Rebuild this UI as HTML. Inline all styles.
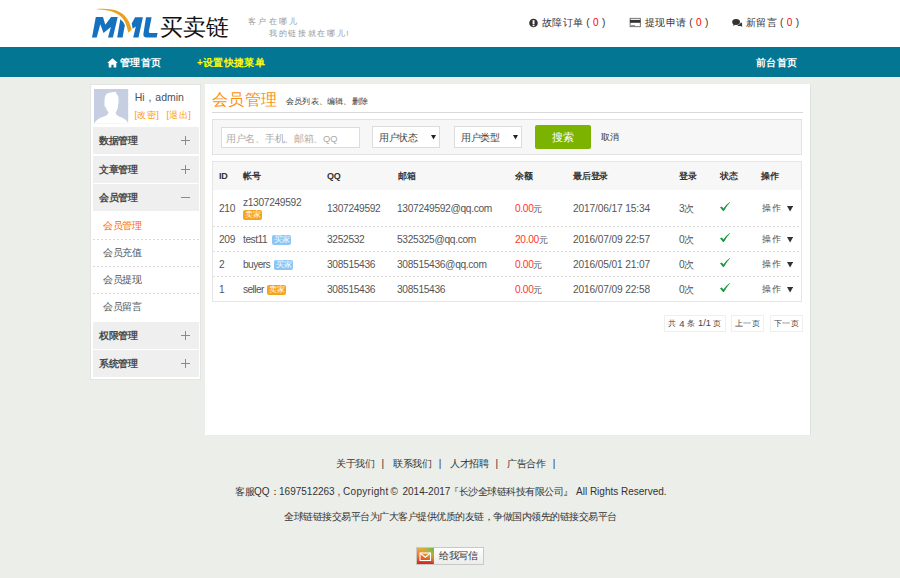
<!DOCTYPE html>
<html><head><meta charset="utf-8">
<style>
*{margin:0;padding:0;box-sizing:border-box}
html,body{width:900px;height:578px;overflow:hidden}
body{background:#eceee9;font-family:"Liberation Sans",sans-serif;color:#333;position:relative}
.a{position:absolute;white-space:nowrap}
#hdr{position:absolute;left:0;top:0;width:900px;height:47px;background:#fff}
#nav{position:absolute;left:0;top:47px;width:900px;height:30px;background:#037693}
#side{position:absolute;left:90px;top:84px;width:111px;height:296px;background:#fff;border:1px solid #e4e4e4}
#main{position:absolute;left:205px;top:84px;width:605px;height:351px;background:#fff;box-shadow:0.5px 0 1px rgba(0,0,0,0.06)}
.hi{font-size:10px;line-height:14px;color:#333;letter-spacing:0.3px}
.red{color:#f00}
.nv{font-size:10px;line-height:14px;color:#fff;font-weight:bold;letter-spacing:0.3px}
.mi{position:absolute;left:2px;width:106px;height:27px;background:#efefef}
.mi .t{position:absolute;left:6px;top:7px;font-size:10px;line-height:14px;font-weight:bold;color:#4a4a4a;letter-spacing:-0.4px}
.mi .p{position:absolute;left:88px;top:9px;width:9px;height:9px}
.mi .p:before{content:"";position:absolute;left:0;top:4px;width:9px;height:1px;background:#8a8a8a}
.mi .p:after{content:"";position:absolute;left:4px;top:0;width:1px;height:9px;background:#8a8a8a}
.mi .m:after{display:none}
.sm{position:absolute;left:12px;font-size:10px;line-height:14px;color:#555;letter-spacing:-0.4px}
.dl{position:absolute;left:2px;width:106px;height:1px;background:repeating-linear-gradient(90deg,#dadada 0 2px,transparent 2px 4px)}
.th{position:absolute;font-size:9px;line-height:14px;font-weight:bold;color:#333;letter-spacing:-0.2px}
.td{position:absolute;font-size:10.2px;line-height:14px;color:#555;letter-spacing:-0.32px;margin-top:0.7px}
.rdl{position:absolute;left:0;width:588px;height:1px;background:repeating-linear-gradient(90deg,#dcdcdc 0 2px,transparent 2px 4px)}
.bd{display:inline-block;font-size:8px;line-height:10px;height:10px;padding:0 1.5px;border-radius:2px;color:#fff;vertical-align:0}
.bo{background:#f7a31c}
.bb{background:#8dc5f5}
.ck{position:absolute;width:10px;height:10px}
.op{position:absolute;font-size:9px;line-height:14px;color:#555;letter-spacing:0.6px}
.pg{position:absolute;top:231px;height:17px;border:1px solid #efefef;font-size:8px;line-height:15px;color:#444;text-align:center;letter-spacing:0.3px}
.ft{font-size:10px;line-height:14px;color:#333}
</style></head>
<body>
<div id="hdr">
  <svg class="a" style="left:0;top:0" width="240" height="47" viewBox="0 0 240 47">
    <path d="M92 37.6 L95.8 17.1 L103 17.1 L105.3 24.8 L111.1 17.1 L117.7 17.1 L112.9 37.6 L108 37.6 L110.9 27 L103.5 32.9 L100.3 24.3 L96.7 37.6 Z" fill="#1570bf"/>
    <path d="M117.2 37.5 L120.3 19.3 Q123.5 21.5 124.8 25.3 L122.6 37.5 Z" fill="#1570bf"/>
    <path d="M131.7 23.6 L135.1 17.3 L142.9 17.3 L138.5 37.5 L133.2 37.5 L135.8 26.5 L132.7 28.7 Z" fill="#1570bf"/>
    <path d="M95 9.2 C103 8.5 113 8.6 119 11.8 C125 14.8 129 19.5 131.7 29.4 L128.3 32.8 C127 27 125.5 21.5 122.5 18.3 C118.5 13.5 112 11 105 10 C101 9.6 97 9.4 95 9.2 Z" fill="#e9a21f" stroke="#fff" stroke-width="1.2" paint-order="stroke"/>
    <path d="M146 17.3 L151.6 17.3 L148.8 31.6 Q148.5 33 150 33 L157.6 33 L156.7 37.5 L147 37.5 Q142.6 37.5 143.5 33.3 Z" fill="#1570bf"/>
  </svg>
  <div id="t_logo" class="a" style="left:160px;top:12px;font-size:23px;line-height:30px;color:#111">买卖链</div>
  <div id="t_slo1" class="a" style="left:248px;top:15.5px;font-size:8px;line-height:12px;color:#999;letter-spacing:2.3px">客户在哪儿</div>
  <div id="t_slo2" class="a" style="left:269px;top:27.5px;font-size:8px;line-height:12px;color:#999;letter-spacing:1.66px">我的链接就在哪儿!</div>

  <svg class="a" style="left:529px;top:18px" width="10" height="10" viewBox="0 0 10 10"><circle cx="4.5" cy="5" r="4.3" fill="#333"/><rect x="3.6" y="2.2" width="1.9" height="3.9" fill="#fff"/><rect x="3.6" y="6.7" width="1.9" height="1.5" fill="#fff"/></svg>
  <div id="t_h1" class="a hi" style="left:542px;top:16px">故障订单 ( <span class="red">0</span> )</div>
  <svg class="a" style="left:629px;top:17px" width="12" height="11" viewBox="0 0 12 11"><rect x="1.1" y="1.3" width="10.2" height="8.4" fill="none" stroke="#555" stroke-width="0.8"/><rect x="1" y="2.9" width="10.4" height="2.9" fill="#333"/><rect x="2" y="8" width="4" height="0.9" fill="#888"/></svg>
  <div id="t_h2" class="a hi" style="left:645px;top:16px">提现申请 ( <span class="red">0</span> )</div>
  <svg class="a" style="left:732px;top:18px" width="12" height="10" viewBox="0 0 12 10"><ellipse cx="4.1" cy="3.9" rx="3.9" ry="3" fill="#333"/><path d="M1.6 6 L1.2 8 L3.8 6.6 Z" fill="#333"/><path d="M9 4.2 Q10.8 5.4 10 7.2 L10.4 8.7 L8.4 7.9 Q6.5 8.3 5.3 7.4 Q8.3 6.8 9 4.2 Z" fill="#333"/></svg>
  <div id="t_h3" class="a hi" style="left:746px;top:16px">新留言 ( <span class="red">0</span> )</div>
</div>

<div id="nav">
  <svg class="a" style="left:107px;top:11px" width="11" height="10" viewBox="0 0 11 10"><path d="M5.5 0.3 L10.8 5 L9.3 5 L9.3 9.6 L6.6 9.6 L6.6 6.8 L4.4 6.8 L4.4 9.6 L1.7 9.6 L1.7 5 L0.2 5 Z" fill="#fff"/></svg>
  <div id="t_nav1" class="a nv" style="left:120px;top:9px">管理首页</div>
  <div id="t_nav2" class="a nv" style="left:197px;top:9px;color:#ff0">+设置快捷菜单</div>
  <div id="t_nav3" class="a nv" style="left:756px;top:8.5px">前台首页</div>
</div>

<div id="side">
  <svg class="a" style="left:3px;top:4px" width="35" height="35" viewBox="0 0 35 35">
    <rect x="0" y="0" width="34.2" height="34.2" fill="#c5cfe1"/>
    <path d="M0.5 34.2 Q2 30 10 27.5 Q14 26 14.5 23.5 Q12.5 21 11.5 18 Q10 17.5 10.5 15 Q10 7 13 4.5 Q17 2.5 22.5 3 L21.8 4 Q24.5 6 24.5 10 Q24.8 14 24 16.5 Q24.2 18.5 23.5 19.5 Q23 22 21.5 23.5 Q22 26 25 27.5 Q33 30 34 34.2 Z" fill="#fff"/>
  </svg>
  <div id="t_hi" class="a" style="left:43.7px;top:5px;font-size:10.5px;line-height:14px;color:#4a4f5a;word-spacing:1px">Hi , admin</div>
  <div id="t_gai" class="a" style="left:43.5px;top:22.5px;width:60px;height:14px;font-size:9px;line-height:14px;color:#f90;letter-spacing:0.45px"><span class="a" style="left:0;top:0">[改密]</span><span class="a" style="left:32px;top:0">[退出]</span></div>

  <div class="mi" style="top:42px"><div id="t_m1" class="t">数据管理</div><div class="p"></div></div>
  <div class="mi" style="top:71px"><div class="t">文章管理</div><div class="p"></div></div>
  <div class="mi" style="top:99px"><div class="t">会员管理</div><div class="p m"></div></div>
  <div id="t_s1" class="sm" style="left:12px;top:134px;color:#f60">会员管理</div>
  <div class="dl" style="top:154px"></div>
  <div class="sm" style="top:161px">会员充值</div>
  <div class="dl" style="top:181px"></div>
  <div class="sm" style="top:188px">会员提现</div>
  <div class="dl" style="top:208px"></div>
  <div class="sm" style="top:215px">会员留言</div>
  <div class="mi" style="top:237px"><div class="t">权限管理</div><div class="p"></div></div>
  <div class="mi" style="top:265px"><div class="t">系统管理</div><div class="p"></div></div>
</div>

<div id="main">
  <div id="t_title" class="a" style="left:7px;top:4.5px;font-size:16px;line-height:22px;color:#f8910f;letter-spacing:0.4px">会员管理</div>
  <div id="t_sub" class="a" style="left:81px;top:11px;font-size:8px;line-height:14px;color:#333;letter-spacing:0.2px">会员列表、编辑、删除</div>
  <div class="a" style="left:7px;top:28px;width:591px;height:1px;background:#d9d9d9"></div>

  <div class="a" style="left:7px;top:35px;width:590px;height:36px;background:#f7f7f7;border:1px solid #e2e2e2"></div>
  <div class="a" style="left:16px;top:43px;width:139px;height:21px;background:#fff;border:1px solid #dcdcdc;padding-left:4px"><span id="t_ph" style="font-size:10px;line-height:18px;color:#aaa;letter-spacing:-0.3px">用户名、手机、邮箱、<span style="font-size:9.3px;letter-spacing:0">QQ</span></span></div>
  <div class="a" style="left:167px;top:42px;width:68px;height:22px;background:#fff;border:1px solid #dcdcdc;padding-left:6px"><span id="t_sel1" style="font-size:10px;line-height:20px;color:#444;letter-spacing:-0.4px">用户状态</span><svg style="position:absolute;left:58.3px;top:8.3px" width="5" height="4.5" viewBox="0 0 5 4.5"><path d="M0 0 L5 0 L2.5 4.5 Z" fill="#222"/></svg></div>
  <div class="a" style="left:249px;top:42px;width:68px;height:22px;background:#fff;border:1px solid #dcdcdc;padding-left:6px"><span id="t_sel2" style="font-size:10px;line-height:20px;color:#444;letter-spacing:-0.4px">用户类型</span><svg style="position:absolute;left:58.3px;top:8.3px" width="5" height="4.5" viewBox="0 0 5 4.5"><path d="M0 0 L5 0 L2.5 4.5 Z" fill="#222"/></svg></div>
  <div class="a" style="left:330px;top:41px;width:56px;height:24px;background:#7cb300;border-radius:2px;text-align:center"><span id="t_srch" style="font-size:11px;line-height:24px;color:#fff;letter-spacing:-0.2px">搜索</span></div>
  <div id="t_cancel" class="a" style="left:396px;top:46px;font-size:9px;line-height:14px;color:#333;letter-spacing:-0.4px">取消</div>

  <div class="a" style="left:7px;top:77px;width:590px;height:141px;border:1px solid #e6e6e6"></div>
  <div class="a" style="left:8px;top:78px;width:588px;height:28px;background:#f7f7f7"></div>
  <div id="t_thid" class="th" style="left:14px;top:85px">ID</div>
  <div id="t_thzh" class="th" style="left:38px;top:85px">帐号</div>
  <div id="t_thqq" class="th" style="left:122px;top:85px">QQ</div>
  <div id="t_thyx" class="th" style="left:193px;top:85px">邮箱</div>
  <div id="t_thye" class="th" style="left:310px;top:85px">余额</div>
  <div id="t_thzh2" class="th" style="left:368px;top:85px">最后登录</div>
  <div id="t_thdl" class="th" style="left:474px;top:85px">登录</div>
  <div id="t_thzt" class="th" style="left:515px;top:85px">状态</div>
  <div id="t_thcz" class="th" style="left:556px;top:85px">操作</div>

  <!-- row 1 -->
  <div id="t_r1id" class="td" style="left:14px;top:117px">210</div>
  <div id="t_r1acc" class="td" style="left:38px;top:111px">z1307249592</div>
  <div class="a bd bo" style="left:38px;top:126.3px">卖家</div>
  <div id="t_r1qq" class="td" style="left:122px;top:117px">1307249592</div>
  <div id="t_r1em" class="td" style="left:192px;top:117px">1307249592@qq.com</div>
  <div id="t_r1ye" class="td" style="left:310px;top:117px"><span style="color:#f33">0.00</span><span style="font-size:9px;margin-left:-0.3px">元</span></div>
  <div id="t_r1dt" class="td" style="left:368px;top:117px"><span style="letter-spacing:-0.15px">2017/06/17 15:34</span></div>
  <div id="t_r1dl" class="td" style="left:474px;top:117px">3次</div>
  <div id="t_r1op" class="op" style="left:557px;top:117px">操作<svg style="position:absolute;left:25px;top:5px" width="6.2" height="5.5" viewBox="0 0 6.2 5.5"><path d="M0 0 L6.2 0 L3.1 5.5 Z" fill="#333"/></svg></div>
  <div class="rdl" style="left:8px;top:142px"></div>
  <!-- row 2 -->
  <div class="td" style="left:14px;top:148px">209</div>
  <div class="td" style="left:38px;top:148px;font-size:10.2px;letter-spacing:-0.45px;margin-top:0.7px">test11</div><div class="a bd bb" style="left:67.4px;top:151px">买家</div>
  <div class="td" style="left:122px;top:148px">3252532</div>
  <div class="td" style="left:192px;top:148px">5325325@qq.com</div>
  <div class="td" style="left:310px;top:148px"><span style="color:#f33">20.00</span><span style="font-size:9px;margin-left:-0.3px">元</span></div>
  <div class="td" style="left:368px;top:148px"><span style="letter-spacing:-0.15px">2016/07/09 22:57</span></div>
  <div class="td" style="left:474px;top:148px">0次</div>
  <div class="op" style="left:557px;top:148px">操作<svg style="position:absolute;left:25px;top:5px" width="6.2" height="5.5" viewBox="0 0 6.2 5.5"><path d="M0 0 L6.2 0 L3.1 5.5 Z" fill="#333"/></svg></div>
  <div class="rdl" style="left:8px;top:167px"></div>
  <!-- row 3 -->
  <div class="td" style="left:14px;top:173px">2</div>
  <div class="td" style="left:38px;top:173px;font-size:10.2px;letter-spacing:-0.6px;margin-top:0.7px">buyers</div><div class="a bd bb" style="left:69px;top:176.3px">买家</div>
  <div class="td" style="left:122px;top:173px">308515436</div>
  <div class="td" style="left:192px;top:173px">308515436@qq.com</div>
  <div class="td" style="left:310px;top:173px"><span style="color:#f33">0.00</span><span style="font-size:9px;margin-left:-0.3px">元</span></div>
  <div class="td" style="left:368px;top:173px"><span style="letter-spacing:-0.15px">2016/05/01 21:07</span></div>
  <div class="td" style="left:474px;top:173px">0次</div>
  <div class="op" style="left:557px;top:173px">操作<svg style="position:absolute;left:25px;top:5px" width="6.2" height="5.5" viewBox="0 0 6.2 5.5"><path d="M0 0 L6.2 0 L3.1 5.5 Z" fill="#333"/></svg></div>
  <div class="rdl" style="left:8px;top:192px"></div>
  <!-- row 4 -->
  <div class="td" style="left:14px;top:198px">1</div>
  <div class="td" style="left:38px;top:198px;font-size:10.2px;letter-spacing:-0.6px;margin-top:0.7px">seller</div><div class="a bd bo" style="left:62px;top:201.3px">卖家</div>
  <div class="td" style="left:122px;top:198px">308515436</div>
  <div class="td" style="left:192px;top:198px">308515436</div>
  <div class="td" style="left:310px;top:198px"><span style="color:#f33">0.00</span><span style="font-size:9px;margin-left:-0.3px">元</span></div>
  <div class="td" style="left:368px;top:198px"><span style="letter-spacing:-0.15px">2016/07/09 22:58</span></div>
  <div class="td" style="left:474px;top:198px">0次</div>
  <div class="op" style="left:557px;top:198px">操作<svg style="position:absolute;left:25px;top:5px" width="6.2" height="5.5" viewBox="0 0 6.2 5.5"><path d="M0 0 L6.2 0 L3.1 5.5 Z" fill="#333"/></svg></div>

  <svg class="ck" style="left:515px;top:118px" viewBox="0 0 10 10"><path d="M0 5.3 L1.9 4.4 L3.4 6.5 Q6 2.6 9.8 0 L10 0.5 Q6.6 3.8 3.9 9.1 L3 9.1 Z" fill="#169a3c"/></svg>
  <svg class="ck" style="left:515px;top:149px" viewBox="0 0 10 10"><path d="M0 5.3 L1.9 4.4 L3.4 6.5 Q6 2.6 9.8 0 L10 0.5 Q6.6 3.8 3.9 9.1 L3 9.1 Z" fill="#169a3c"/></svg>
  <svg class="ck" style="left:515px;top:174px" viewBox="0 0 10 10"><path d="M0 5.3 L1.9 4.4 L3.4 6.5 Q6 2.6 9.8 0 L10 0.5 Q6.6 3.8 3.9 9.1 L3 9.1 Z" fill="#169a3c"/></svg>
  <svg class="ck" style="left:515px;top:199px" viewBox="0 0 10 10"><path d="M0 5.3 L1.9 4.4 L3.4 6.5 Q6 2.6 9.8 0 L10 0.5 Q6.6 3.8 3.9 9.1 L3 9.1 Z" fill="#169a3c"/></svg>

  <div class="pg" style="left:459px;width:62px"><span id="t_pg1" class="a" style="left:0;top:0;width:60px;height:15px"><span class="a" style="left:3px">共</span><span class="a" style="left:14.3px;font-size:9.5px;letter-spacing:0">4</span><span class="a" style="left:22.3px">条</span><span class="a" style="left:33px;font-size:9.3px;letter-spacing:0">1/1</span><span class="a" style="left:47.8px">页</span></span></div>
  <div class="pg" style="left:526px;width:33px"><span id="t_pg2">上一页</span></div>
  <div class="pg" style="left:565px;width:33px">下一页</div>
</div>

<div id="t_ftl" class="a ft" style="left:336px;top:457px;width:220px;height:14px">
  <span class="a" style="left:0;letter-spacing:-0.3px">关于我们</span><span class="a" style="left:45.5px">|</span>
  <span class="a" style="left:57px;letter-spacing:-0.3px">联系我们</span><span class="a" style="left:102.7px">|</span>
  <span class="a" style="left:114px;letter-spacing:-0.3px">人才招聘</span><span class="a" style="left:159.6px">|</span>
  <span class="a" style="left:171px;letter-spacing:-0.3px">广告合作</span><span class="a" style="left:216.8px">|</span>
</div>
<div id="t_ftc" class="a ft" style="left:235px;top:485px;width:432px;height:14px">
  <span class="a" style="left:0"><span style="letter-spacing:-0.5px">客服</span>QQ<span style="letter-spacing:-0.5px">：</span>1697512263 ,</span>
  <span class="a" style="left:108px;letter-spacing:0.3px">Copyright</span>
  <span class="a" style="left:155.5px">©</span>
  <span class="a" style="left:167.5px">2014-2017</span>
  <span class="a" style="left:214px;letter-spacing:-0.5px">『长沙全球链科技有限公司』</span>
  <span class="a" style="left:341px">All Rights Reserved.</span>
</div>
<div id="t_ft2" class="a ft" style="left:284px;top:510px;letter-spacing:-0.5px">全球链链接交易平台为广大客户提供优质的友链，争做国内领先的链接交易平台</div>

<div class="a" style="left:416px;top:547px;width:68px;height:18px;border:1px solid #c8c8c8;background:linear-gradient(#fff,#ececec)">
  <svg class="a" style="left:0;top:0" width="17" height="16" viewBox="0 0 17 16">
    <defs><linearGradient id="mg" x1="0" y1="0" x2="0" y2="1"><stop offset="0" stop-color="#f3a83e"/><stop offset="0.5" stop-color="#e9772c"/><stop offset="1" stop-color="#d0261b"/></linearGradient>
    <linearGradient id="mg2" x1="1" y1="0" x2="0.45" y2="0.55"><stop offset="0" stop-color="#62b549" stop-opacity="1"/><stop offset="0.5" stop-color="#9cbf45" stop-opacity="0.7"/><stop offset="1" stop-color="#e9a83a" stop-opacity="0"/></linearGradient></defs>
    <rect width="17" height="16" fill="url(#mg)"/>
    <rect width="17" height="16" fill="url(#mg2)"/>
    <rect x="3" y="5" width="10.5" height="7.5" fill="none" stroke="#fff" stroke-width="1.1"/>
    <path d="M3.3 5.3 L8.25 9.3 L13.2 5.3" fill="none" stroke="#fff" stroke-width="1.1"/>
  </svg>
  <div id="t_mail" class="a" style="left:22px;top:1px;font-size:10px;line-height:14px;color:#333;letter-spacing:-0.4px">给我写信</div>
</div>

</body></html>
